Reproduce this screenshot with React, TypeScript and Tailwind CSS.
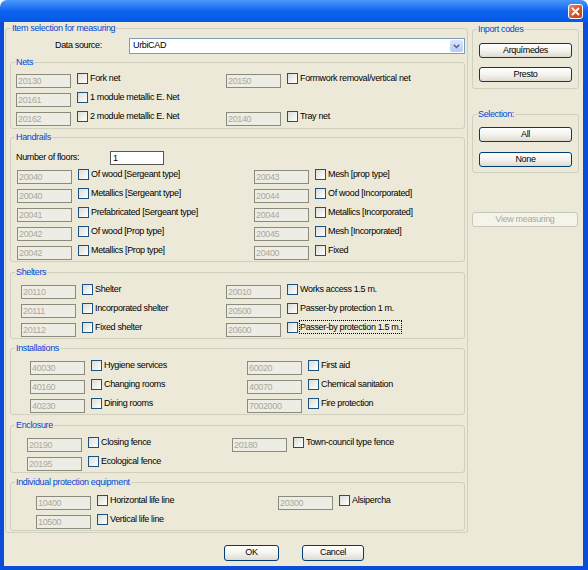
import React from 'react';

type Cell = [string, string, boolean?];
type Row = { left?: Cell; right?: Cell };

function Field({ cell }: { cell: Cell }) {
  const [code, label, focus] = cell;
  return (
    <div className="flex items-start">
      <div className="h-[14px] w-[55px] border border-[#8b8a7e] bg-[#eeede5] pl-[1px] leading-[12px] text-[#aca899]">
        {code}
      </div>
      <div className="-mt-[1px] ml-[6px] h-[11px] w-[11px] shrink-0 border border-[#1c5180] bg-linear-to-br from-[#dcdcd7] to-white" />
      <span
        className={
          '-mt-[2px] ml-[2px] whitespace-nowrap leading-[12px] ' +
          (focus ? 'outline outline-1 outline-dotted outline-black' : '')
        }
      >
        {label}
      </span>
    </div>
  );
}

function Group({
  title,
  top,
  pad,
  lx,
  cw,
  rows,
  children,
}: {
  title: string;
  top: string;
  pad: string;
  lx: string;
  cw: string;
  rows: Row[];
  children?: React.ReactNode;
}) {
  return (
    <fieldset className={`ml-[4px] w-[455px] rounded-[3px] border border-[#d0d0bf] ${top}`}>
      <legend className="ml-[4px] px-[1px] leading-[12px] text-[#0046d5]">{title}</legend>
      <div className={`flex flex-col gap-[5px] ${pad}`}>
        {children}
        {rows.map((r, i) => (
          <div key={i} className={`flex h-[14px] ${lx}`}>
            <div className={cw}>{r.left && <Field cell={r.left} />}</div>
            <div>{r.right && <Field cell={r.right} />}</div>
          </div>
        ))}
      </div>
    </fieldset>
  );
}

function XpButton({ label, w, disabled }: { label: string; w: string; disabled?: boolean }) {
  return (
    <div
      className={
        `flex h-[15px] items-center justify-center rounded-[3px] border ${w} ` +
        (disabled
          ? 'border-[#c9c7ba] bg-[#f5f4ea] text-[#aca899]'
          : 'border-[#003c74] bg-linear-to-b from-white via-[#f4f3ee] to-[#dedbd0] text-black')
      }
    >
      {label}
    </div>
  );
}

export default function App() {
  return (
    <div className="h-[570px] w-[588px] bg-white font-['Liberation_Sans',Arial,sans-serif] text-[9px] tracking-[-0.35px] text-black">
      {/* Title bar */}
      <div className="flex h-[22px] justify-end rounded-t-[7px] bg-linear-to-b from-[#4a97fa] via-[#0c63ee] to-[#0658e6] pr-[5px] pt-[4px]">
        <div className="flex h-[15px] w-[15px] items-center justify-center rounded-[3px] border border-white bg-linear-to-br from-[#e98a6a] via-[#d9542f] to-[#c4401d]">
          <svg width="9" height="9" viewBox="0 0 9 9">
            <path d="M1.5 1.5 L7.5 7.5 M7.5 1.5 L1.5 7.5" stroke="white" strokeWidth="1.8" strokeLinecap="round" />
          </svg>
        </div>
      </div>

      {/* Body */}
      <div className="flex h-[548px] border-b-[4px] border-l-[4px] border-r-[5px] border-[#0b4dd8] bg-[#ece9d8]">
        {/* Left column */}
        <div className="flex flex-col">
          <fieldset className="ml-[1px] w-[463px] rounded-[3px] border border-[#d0d0bf] pb-[1px]">
            <legend className="ml-[5px] px-[1px] leading-[12px] text-[#0046d5]">Item selection for measuring</legend>

            <div className="ml-[49px] mt-[4px] flex h-[16px] items-center">
              <span className="w-[74px]">Data source:</span>
              <div className="flex h-[16px] w-[336px] items-center border border-[#7f9db9] bg-white">
                <span className="flex-1 pl-[3px]">UrbiCAD</span>
                <div className="m-[1px] flex h-[12px] w-[13px] items-center justify-center rounded-[2px] bg-linear-to-b from-[#dbe5fb] to-[#b7cbf6]">
                  <svg width="7" height="5" viewBox="0 0 7 5">
                    <path d="M0.8 0.8 L3.5 3.6 L6.2 0.8" fill="none" stroke="#4d6185" strokeWidth="1.4" />
                  </svg>
                </div>
              </div>
            </div>

            <Group
              title="Nets"
              top="mt-[2px]"
              pad="pt-[6px] pb-[2px]"
              lx="ml-[5px]"
              cw="w-[210px]"
              rows={[
                { left: ['20130', 'Fork net'], right: ['20150', 'Formwork removal/vertical net'] },
                { left: ['20161', '1 module metallic E. Net'] },
                { left: ['20162', '2 module metallic E. Net'], right: ['20140', 'Tray net'] },
              ]}
            />

            <Group
              title="Handrails"
              top="mt-[2px]"
              pad="pt-[8px] pb-[1px]"
              lx="ml-[6px]"
              cw="w-[237px]"
              rows={[
                { left: ['20040', 'Of wood [Sergeant type]'], right: ['20043', 'Mesh [prop type]'] },
                { left: ['20040', 'Metallics [Sergeant type]'], right: ['20044', 'Of wood [Incorporated]'] },
                { left: ['20041', 'Prefabricated [Sergeant type]'], right: ['20044', 'Metallics [Incorporated]'] },
                { left: ['20042', 'Of wood [Prop type]'], right: ['20045', 'Mesh [Incorporated]'] },
                { left: ['20042', 'Metallics [Prop type]'], right: ['20400', 'Fixed'] },
              ]}
            >
              <div className="ml-[5px] flex h-[14px] items-center">
                <span className="w-[94px]">Number of floors:</span>
                <div className="h-[14px] w-[54px] border border-[#555] bg-white pl-[2px] leading-[12px]">1</div>
              </div>
            </Group>

            <Group
              title="Shelters"
              top="mt-[4px]"
              pad="pt-[7px] pb-[1px]"
              lx="ml-[10px]"
              cw="w-[205px]"
              rows={[
                { left: ['20110', 'Shelter'], right: ['20010', 'Works access 1.5 m.'] },
                { left: ['20111', 'Incorporated shelter'], right: ['20500', 'Passer-by protection 1 m.'] },
                { left: ['20112', 'Fixed shelter'], right: ['20600', 'Passer-by protection 1.5 m.', true] },
              ]}
            />

            <Group
              title="Installations"
              top="mt-[3px]"
              pad="pt-[7px] pb-[1px]"
              lx="ml-[19px]"
              cw="w-[217px]"
              rows={[
                { left: ['40030', 'Hygiene services'], right: ['60020', 'First aid'] },
                { left: ['40160', 'Changing rooms'], right: ['40070', 'Chemical sanitation'] },
                { left: ['40230', 'Dining rooms'], right: ['7002000', 'Fire protection'] },
              ]}
            />

            <Group
              title="Enclosure"
              top="mt-[4px]"
              pad="pt-[7px] pb-[1px]"
              lx="ml-[16px]"
              cw="w-[205px]"
              rows={[
                { left: ['20190', 'Closing fence'], right: ['20180', 'Town-council type fence'] },
                { left: ['20195', 'Ecological fence'] },
              ]}
            />

            <Group
              title="Individual protection equipment"
              top="mt-[3px]"
              pad="pt-[8px] pb-[1px]"
              lx="ml-[25px]"
              cw="w-[242px]"
              rows={[
                { left: ['10400', 'Horizontal life line'], right: ['20300', 'Alsipercha'] },
                { left: ['10500', 'Vertical life line'] },
              ]}
            />
          </fieldset>

          <div className="ml-[220px] mt-[12px] flex gap-[23px]">
            <XpButton label="OK" w="w-[55px] h-[16px]" />
            <XpButton label="Cancel" w="w-[62px] h-[16px]" />
          </div>
        </div>

        {/* Right column */}
        <div className="ml-[4px] flex w-[107px] flex-col">
          <fieldset className="mt-[1px] rounded-[3px] border border-[#d0d0bf] pb-[6px]">
            <legend className="ml-[4px] px-[1px] leading-[12px] text-[#0046d5]">Inport codes</legend>
            <div className="ml-[6px] flex flex-col gap-[9px] pt-[8px]">
              <XpButton label="Arquímedes" w="w-[93px]" />
              <XpButton label="Presto" w="w-[93px]" />
            </div>
          </fieldset>

          <fieldset className="mt-[19px] rounded-[3px] border border-[#d0d0bf] pb-[5px]">
            <legend className="ml-[4px] px-[1px] leading-[12px] text-[#0046d5]">Selection:</legend>
            <div className="ml-[6px] flex flex-col gap-[10px] pt-[7px]">
              <XpButton label="All" w="w-[93px]" />
              <XpButton label="None" w="w-[93px]" />
            </div>
          </fieldset>

          <div className="mt-[39px]">
            <XpButton label="View measuring" w="w-[106px] h-[14px]" disabled />
          </div>
        </div>
      </div>
    </div>
  );
}
